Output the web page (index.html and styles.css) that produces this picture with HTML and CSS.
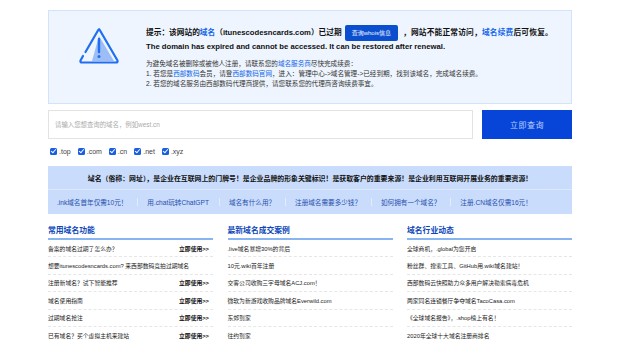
FILE: index.html
```html
<!DOCTYPE html>
<html lang="zh-CN">
<head>
<meta charset="utf-8">
<title>域名已过期</title>
<link rel="stylesheet" href="styles.css">
</head>
<body>
<div class="wrap">
  <div class="notice">
    <div class="notice-icon">
      <svg width="42" height="38" viewBox="0 0 42 38">
        <path d="M21 9 L36 34 L14 34 Z" fill="#9dbdf6"/>
        <path d="M21 2.5 Q21 2 21.6 2.8 L39.5 33.5 Q40 35.5 38 35.5 L4 35.5 Q2 35.5 2.5 33.5 L5 29" fill="none" stroke="#1f6ff0" stroke-width="2.2" stroke-linecap="round" stroke-linejoin="round"/>
        <path d="M7.5 25 L20.4 2.8" fill="none" stroke="#1f6ff0" stroke-width="2.2" stroke-linecap="round"/>
        <path d="M21 12 L21 25" stroke="#1f6ff0" stroke-width="2.4" stroke-linecap="round"/>
        <circle cx="21" cy="29.5" r="1.5" fill="#1f6ff0"/>
      </svg>
    </div>
    <div class="notice-body">
      <p class="n-title">提示：该网站的<a class="lnk">域名</a>（itunescodesncards.com）已过期 <a class="whois">查询whois信息</a><span class="after">，网站不能正常访问，<a class="lnk">域名续费</a>后可恢复。</span></p>
      <p class="n-en">The domain has expired and cannot be accessed. It can be restored after renewal.</p>
      <ul class="n-tips">
        <li>为避免域名被删除或被他人注册，请联系您的<a class="lnk">域名服务商</a>尽快完成续费：</li>
        <li>1. 若您是<a class="lnk">西部数码</a>会员，请登<a class="lnk">西部数码官网</a>，进入：管理中心-&gt;域名管理-&gt;已经到期，找到该域名，完成域名续费。</li>
        <li>2. 若您的域名服务由西部数码代理商提供，请您联系您的代理商咨询续费事宜。</li>
      </ul>
    </div>
  </div>

  <div class="search">
    <div class="search-input">请输入您想查询的域名，例如west.cn</div>
    <div class="search-btn">立即查询</div>
  </div>

  <div class="exts">
    <label class="ext"><span class="cb"></span>.top</label>
    <label class="ext"><span class="cb"></span>.com</label>
    <label class="ext"><span class="cb"></span>.cn</label>
    <label class="ext"><span class="cb"></span>.net</label>
    <label class="ext"><span class="cb"></span>.xyz</label>
  </div>

  <div class="band">
    <div class="band-title">域名（俗称：网址），是企业在互联网上的门牌号！是企业品牌的形象关键标识！是获取客户的重要来源！是企业利用互联网开展业务的重要资源！</div>
    <div class="band-links">
      <a>.ink域名首年仅需10元！</a><span class="sep"></span>
      <a>用.chat玩转ChatGPT</a><span class="sep"></span>
      <a>域名有什么用？</a><span class="sep"></span>
      <a>注册域名需要多少钱？</a><span class="sep"></span>
      <a>如何拥有一个域名？</a><span class="sep"></span>
      <a>注册.CN域名仅需16元！</a>
    </div>
  </div>

  <div class="cols">
    <div class="col">
      <h3>常用域名功能</h3>
      <ul>
        <li><span>备案的域名过期了怎么办？</span><b>立即使用&gt;&gt;</b></li>
        <li><span>想要itunescodesncards.com? 来西部数码竞拍过期域名</span></li>
        <li><span>注册新域名？试下智能推荐</span><b>立即使用&gt;&gt;</b></li>
        <li><span>域名使用指南</span><b>立即使用&gt;&gt;</b></li>
        <li><span>过期域名抢注</span><b>立即使用&gt;&gt;</b></li>
        <li><span>已有域名？买个虚拟主机来建站</span><b>立即使用&gt;&gt;</b></li>
      </ul>
    </div>
    <div class="col">
      <h3>最新域名成交案例</h3>
      <ul>
        <li><span>.live域名暴增30%的背后</span></li>
        <li><span>10元.wiki首年注册</span></li>
        <li><span>交客公司收购三字母域名ACJ.com！</span></li>
        <li><span>微软为新游戏收购品牌域名Everwild.com</span></li>
        <li><span>东郊到家</span></li>
        <li><span>往约到家</span></li>
      </ul>
    </div>
    <div class="col">
      <h3>域名行业动态</h3>
      <ul>
        <li><span>全球商机，.global为您开启</span></li>
        <li><span>粉丝群、搜索工具、GitHub用.wiki域名建站！</span></li>
        <li><span>西部数码云快照助力众多用户解决勒索病毒危机</span></li>
        <li><span>两家同名连锁餐厅争夺域名TacoCasa.com</span></li>
        <li><span>《全球域名报告》，.shop榜上有名！</span></li>
        <li><span>2020年全球十大域名注册商排名</span></li>
      </ul>
    </div>
  </div>
</div>
</body>
</html>
```

FILE: styles.css
```css
* { box-sizing: border-box; }
html, body { margin: 0; padding: 0; background: #fff; }
body {
  font-family: "Liberation Sans", Arial, "Noto Sans CJK SC", sans-serif;
  color: #333;
}
p, ul { margin: 0; padding: 0; list-style: none; }
a { text-decoration: none; }
.wrap { width: 524px; margin: 0 auto; padding-top: 10px; }

.notice {
  display: flex;
  height: 94px;
  border: 1px solid #d2e4fb;
  background: #eef5fe;
}
.notice-icon {
  width: 97px;
  display: flex;
  justify-content: center;
  padding-top: 16px;
  padding-left: 2px;
}
.notice-body { padding-top: 13px; }
.n-title {
  font-size: 7.7px;
  font-weight: bold;
  color: #111;
  line-height: 18px;
  display: flex;
  align-items: center;
  white-space: nowrap;
}
.lnk { color: #1164e6; }
.n-title .lnk { color: #1366ea; }
.whois {
  display: inline-block;
  background: #0b4fcf;
  color: #eef3ff;
  font-weight: normal;
  font-size: 6px;
  line-height: 16px;
  height: 16px;
  padding: 0 7px;
  border-radius: 2px;
  margin: 0 5px 0 3px;
}
.after { letter-spacing: 0.2px; }
.n-en {
  font-size: 7.7px;
  font-weight: bold;
  color: #111;
  line-height: 10px;
}
.n-tips { margin-top: 7px; }
.n-tips li {
  font-size: 6.6px;
  line-height: 10px;
  color: #333;
  white-space: nowrap;
}

.search {
  display: flex;
  gap: 9px;
  margin-top: 6px;
  height: 29px;
}
.search-input {
  flex: 1;
  border: 1px solid #e3e3e3;
  background: #fff;
  font-size: 6.4px;
  color: #aaa;
  display: flex;
  align-items: center;
  padding-left: 6px;
}
.search-btn {
  width: 90px;
  background: #0745d8;
  color: #bcd0ff;
  font-size: 8px;
  display: flex;
  align-items: center;
  justify-content: center;
  letter-spacing: 0.5px;
}

.exts {
  display: flex;
  gap: 7px;
  padding-left: 2px;
  margin-top: 7px;
  height: 10px;
  align-items: center;
}
.ext {
  display: flex;
  align-items: center;
  font-size: 7px;
  color: #444;
}
.cb {
  width: 7px;
  height: 7px;
  border-radius: 1.5px;
  background: #1a5fe0;
  margin-right: 2px;
  position: relative;
}
.cb::after {
  content: "";
  position: absolute;
  left: 2.2px;
  top: 0.6px;
  width: 2px;
  height: 3.8px;
  border: solid #fff;
  border-width: 0 1px 1px 0;
  transform: rotate(40deg);
}

.band {
  margin-top: 10px;
  background: #cadcfb;
}
.band-title {
  height: 24px;
  display: flex;
  align-items: center;
  justify-content: center;
  font-size: 6.9px;
  font-weight: bold;
  color: #111;
  border-bottom: 1px solid #dbe7fc;
  white-space: nowrap;
}
.band-links {
  height: 24px;
  display: flex;
  align-items: center;
  padding-left: 9px;
  font-size: 6.6px;
  color: #1f4fae;
  white-space: nowrap;
}
.band-links a { color: #1f4fae; }
.sep {
  width: 1px;
  height: 8px;
  background: #e3ecfd;
  margin: 0 9px 0 10px;
}

.cols {
  display: grid;
  grid-template-columns: repeat(3, 165px);
  column-gap: 14.5px;
  margin-top: 10px;
}
.col h3 {
  margin: 0;
  font-size: 7.8px;
  font-weight: bold;
  color: #0c46b8;
  line-height: 14px;
  border-bottom: 2px solid #86b5f2;
}
.col li {
  height: 17.4px;
  display: flex;
  align-items: center;
  justify-content: space-between;
  border-bottom: 1px dashed #e6e6e6;
  font-size: 5.8px;
  color: #222;
  white-space: nowrap;
}
.col li b { font-weight: bold; color: #111; padding-right: 4px; }
```
